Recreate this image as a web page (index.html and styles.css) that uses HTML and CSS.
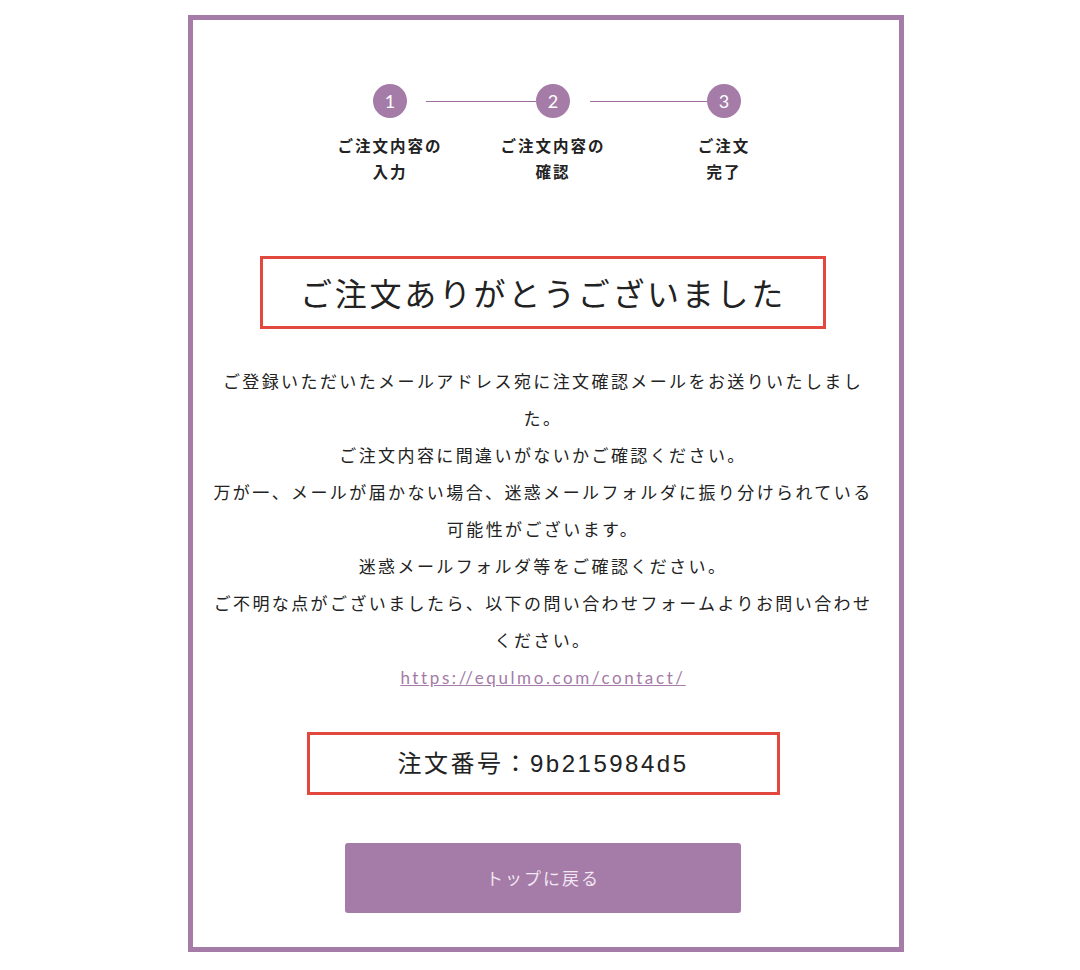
FILE: index.html
```html
<!doctype html>
<html lang="ja">
<head>
	<meta charset="UTF-8" />
	<title>ご注文完了</title>
	<link rel="stylesheet" href="styles.css">
</head>
<body>
    <!--外枠-->
    <div class="frame">
        <!--ステップ-->
        <div class="steps">
            <span class="num">1</span>
            <span class="bar"></span>
            <span class="num">2</span>
            <span class="bar"></span>
            <span class="num">3</span>
            <span class="label">ご注文内容の<br>入力</span>
            <span class="label l2">ご注文内容の<br>確認</span>
            <span class="label l3">ご注文<br>完了</span>
        </div>

        <h1 class="thanks">ご注文ありがとうございました</h1>

        <div class="message">
            <p>ご登録いただいたメールアドレス宛に注文確認メールをお送りいたしました。</p>
            <p>ご注文内容に間違いがないかご確認ください。</p>
            <p>万が一、メールが届かない場合、迷惑メールフォルダに振り分けられている可能性がございます。</p>
            <p>迷惑メールフォルダ等をご確認ください。</p>
            <p>ご不明な点がございましたら、以下の問い合わせフォームよりお問い合わせください。</p>
            <p><a href="#" class="link">https://equlmo.com/contact/</a></p>
        </div>

        <div class="order">注文番号：9b215984d5</div>

        <a href="#" class="btn">トップに戻る</a>
    </div>
</body>
</html>
```

FILE: styles.css
```css
* {
    padding: 0;
    margin: 0;
    box-sizing: border-box;
}

body {
    background: #fff;
    font-family: "Noto Sans CJK JP", sans-serif;
    color: #222;
}

.frame {
    width: 716px;
    height: 937px;
    margin: 15px 0 0 188px;
    border: 5px solid #a57ba8;
    padding: 64px 20px 0 14px;
    display: flex;
    flex-direction: column;
    align-items: center;
}

/* ステップ */
.steps {
    display: grid;
    grid-template-columns: 34px 129px 34px 137px 34px;
    grid-template-rows: 34px auto;
    row-gap: 14px;
    align-self: flex-start;
    margin-left: 166px;
}

.num {
    width: 34px;
    height: 34px;
    border-radius: 50%;
    background: #a57ba8;
    color: #fff;
    font-family: "Lato", sans-serif;
    font-size: 18px;
    line-height: 34px;
    text-align: center;
}

.bar {
    align-self: center;
    height: 1px;
    background: #9c6fa0;
    margin-left: 19px;
}

.bar + .num + .bar {
    margin-left: 20px;
}

.label {
    grid-row: 2;
    grid-column: 1;
    justify-self: center;
    white-space: nowrap;
    text-align: center;
    font-size: 15.5px;
    font-weight: 600;
    letter-spacing: 2px;
    line-height: 26px;
    color: #222;
}

.label.l2 {
    grid-column: 3;
}

.label.l3 {
    grid-column: 5;
}

/* タイトル */
.thanks {
    margin-top: 72px;
    width: 566px;
    height: 73px;
    border: 3px solid #e2483d;
    font-size: 32px;
    font-weight: 400;
    letter-spacing: 2.7px;
    line-height: 67px;
    text-align: center;
    color: #222;
}

/* 本文 */
.message {
    margin-top: 33px;
    width: 672px;
    font-size: 17px;
    letter-spacing: 2.4px;
    line-height: 37px;
    text-align: center;
    color: #222;
}

.link {
    font-family: "Lato", sans-serif;
    color: #a57ba8;
    letter-spacing: 2.6px;
    font-size: 17px;
}

/* 注文番号 */
.order {
    margin-top: 36px;
    width: 473px;
    height: 63px;
    border: 3px solid #e2483d;
    font-family: "Liberation Sans", "Noto Sans CJK JP", sans-serif;
    font-size: 24px;
    letter-spacing: 2.5px;
    line-height: 57px;
    text-align: center;
    color: #222;
}

.btn {
    margin-top: 48px;
    width: 396px;
    height: 70px;
    border-radius: 3px;
    background: #a57ba8;
    color: #f1e6f1;
    text-decoration: none;
    font-size: 17px;
    letter-spacing: 2px;
    line-height: 70px;
    text-align: center;
}
```
